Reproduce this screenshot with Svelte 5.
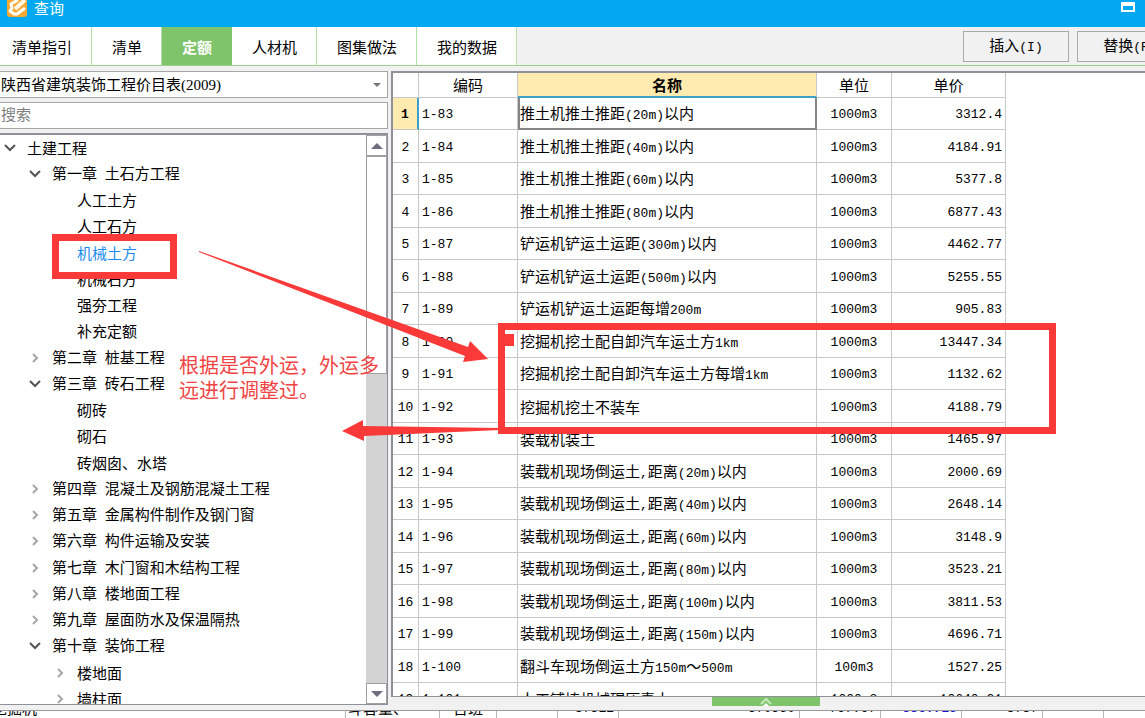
<script lang="ts">
    type Node = { label: string; level: number; state?: 'open' | 'closed' };
    type Row = { code: string; name: string; unit: string; price: string };

    const tabs = ['清单指引', '清单', '定额', '人材机', '图集做法', '我的数据'];
    let activeTab = $state('定额');
    let selectedNode = $state('机械土方');
    let selectedRow = $state(0);
    let keyword = $state('');

    const nodes: Node[] = [
        { label: '土建工程', level: 0, state: 'open' },
        { label: '第一章 土石方工程', level: 1, state: 'open' },
        { label: '人工土方', level: 2 },
        { label: '人工石方', level: 2 },
        { label: '机械土方', level: 2 },
        { label: '机械石方', level: 2 },
        { label: '强夯工程', level: 2 },
        { label: '补充定额', level: 2 },
        { label: '第二章 桩基工程', level: 1, state: 'closed' },
        { label: '第三章 砖石工程', level: 1, state: 'open' },
        { label: '砌砖', level: 2 },
        { label: '砌石', level: 2 },
        { label: '砖烟囱、水塔', level: 2 },
        { label: '第四章 混凝土及钢筋混凝土工程', level: 1, state: 'closed' },
        { label: '第五章 金属构件制作及钢门窗', level: 1, state: 'closed' },
        { label: '第六章 构件运输及安装', level: 1, state: 'closed' },
        { label: '第七章 木门窗和木结构工程', level: 1, state: 'closed' },
        { label: '第八章 楼地面工程', level: 1, state: 'closed' },
        { label: '第九章 屋面防水及保温隔热', level: 1, state: 'closed' },
        { label: '第十章 装饰工程', level: 1, state: 'open' },
        { label: '楼地面', level: 2, state: 'closed' },
        { label: '墙柱面', level: 2, state: 'closed' }
    ];

    const rows: Row[] = [
        { code: '1-83', name: '推土机推土推距(20m)以内', unit: '1000m3', price: '3312.4' },
        { code: '1-84', name: '推土机推土推距(40m)以内', unit: '1000m3', price: '4184.91' },
        { code: '1-85', name: '推土机推土推距(60m)以内', unit: '1000m3', price: '5377.8' },
        { code: '1-86', name: '推土机推土推距(80m)以内', unit: '1000m3', price: '6877.43' },
        { code: '1-87', name: '铲运机铲运土运距(300m)以内', unit: '1000m3', price: '4462.77' },
        { code: '1-88', name: '铲运机铲运土运距(500m)以内', unit: '1000m3', price: '5255.55' },
        { code: '1-89', name: '铲运机铲运土运距每增200m', unit: '1000m3', price: '905.83' },
        { code: '1-90', name: '挖掘机挖土配自卸汽车运土方1km', unit: '1000m3', price: '13447.34' },
        { code: '1-91', name: '挖掘机挖土配自卸汽车运土方每增1km', unit: '1000m3', price: '1132.62' },
        { code: '1-92', name: '挖掘机挖土不装车', unit: '1000m3', price: '4188.79' },
        { code: '1-93', name: '装载机装土', unit: '1000m3', price: '1465.97' },
        { code: '1-94', name: '装载机现场倒运土,距离(20m)以内', unit: '1000m3', price: '2000.69' },
        { code: '1-95', name: '装载机现场倒运土,距离(40m)以内', unit: '1000m3', price: '2648.14' },
        { code: '1-96', name: '装载机现场倒运土,距离(60m)以内', unit: '1000m3', price: '3148.9' },
        { code: '1-97', name: '装载机现场倒运土,距离(80m)以内', unit: '1000m3', price: '3523.21' },
        { code: '1-98', name: '装载机现场倒运土,距离(100m)以内', unit: '1000m3', price: '3811.53' },
        { code: '1-99', name: '装载机现场倒运土,距离(150m)以内', unit: '1000m3', price: '4696.71' },
        { code: '1-100', name: '翻斗车现场倒运土方150m～500m', unit: '100m3', price: '1527.25' },
        { code: '1-101', name: '人工铺填机械碾压素土', unit: '1000m3', price: '10640.21' }
    ];

    // latin runs are set in the mono face, half the width of a han character
    const split = (text: string) => text.match(/[\x20-\x7e]+|[^\x20-\x7e]+/g) ?? [];
    const isLatin = (part: string) => /^[\x20-\x7e]/.test(part);
</script>

{#snippet mixed(text: string)}
    {#each split(text) as part}{#if isLatin(part)}<span class="latin">{part}</span>{:else}{part}{/if}{/each}
{/snippet}

<div class="page">
    <div class="window">
        <header class="titlebar">
            <svg class="logo" width="20" height="17" viewBox="0 0 20 17">
                <rect x="0" y="-4" width="20" height="21" rx="3" fill="#f5a832" />
                <path
                    d="M11 0L4 4L5 8L3 11L7 14L10 14L18 8"
                    fill="none"
                    stroke="#fff"
                    stroke-width="3"
                    stroke-linejoin="round"
                />
                <path d="M8 9L18 0" stroke="#fff6e4" stroke-width="4" />
            </svg>
            <span>查询</span>
            <button class="maximize" aria-label="最大化">
                <svg width="14" height="10" viewBox="0 0 14 10">
                    <path d="M0 0H14V10H0Z M2 4V8H12V4Z" fill="#fff" fill-rule="evenodd" />
                </svg>
            </button>
        </header>

        <nav class="toolbar">
            {#each tabs as tab}
                <button class="tab" class:active={tab === activeTab} onclick={() => (activeTab = tab)}>{tab}</button>
            {/each}
            <div class="actions">
                <button class="action">{@render mixed('插入(I)')}</button>
                <button class="action">{@render mixed('替换(R)')}</button>
            </div>
        </nav>

        <main>
            <aside>
                <div class="library">
                    <select aria-label="定额库">
                        <option>陕西省建筑装饰工程价目表(2009)</option>
                    </select>
                    <svg width="8" height="4" viewBox="0 0 8 4"><path d="M0 0H8L4 4Z" fill="#777" /></svg>
                </div>
                <input class="search" type="text" placeholder="搜索" aria-label="搜索" bind:value={keyword} />

                <div class="tree">
                    <ul>
                        {#each nodes as node}
                            <li>
                                <button
                                    class="node level-{node.level}"
                                    class:selected={node.label === selectedNode}
                                    onclick={() => (selectedNode = node.label)}
                                >
                                    {#if node.state === 'open'}
                                        <svg width="12" height="12" viewBox="0 0 12 12">
                                            <path d="M1 2L6 7L11 2" fill="none" stroke="#555" stroke-width="2" />
                                        </svg>
                                    {:else if node.state === 'closed'}
                                        <svg width="12" height="12" viewBox="0 0 12 12">
                                            <path d="M4 1L8 5L4 9" fill="none" stroke="#a6a6a6" stroke-width="2" />
                                        </svg>
                                    {:else}
                                        <i></i>
                                    {/if}
                                    <span>{@render mixed(node.label)}</span>
                                </button>
                            </li>
                        {/each}
                    </ul>
                    <div class="scrollbar">
                        <button aria-label="向上"><svg width="12" height="6" viewBox="0 0 12 6"><path d="M0 6H12L6 0Z" fill="#6d6d80" /></svg></button>
                        <div class="thumb"></div>
                        <button class="down" aria-label="向下"><svg width="12" height="6" viewBox="0 0 12 6"><path d="M0 0H12L6 6Z" fill="#6d6d80" /></svg></button>
                    </div>
                </div>
            </aside>

            <section>
                <div class="grid">
                    <table>
                        <colgroup>
                            <col class="c-index" /><col class="c-code" /><col class="c-name" /><col class="c-unit" /><col class="c-price" />
                        </colgroup>
                        <thead>
                            <tr>
                                <th></th>
                                <th>编码</th>
                                <th class="current">名称</th>
                                <th>单位</th>
                                <th>单价</th>
                            </tr>
                        </thead>
                        <tbody>
                            {#each rows as row, i}
                                <tr class:selected={i === selectedRow} onclick={() => (selectedRow = i)}>
                                    <td class="index latin">{i + 1}</td>
                                    <td class="latin">{row.code}</td>
                                    <td class="name">{@render mixed(row.name)}</td>
                                    <td class="unit latin">{row.unit}</td>
                                    <td class="price latin">{row.price}</td>
                                </tr>
                            {/each}
                        </tbody>
                    </table>
                </div>
                <button class="expander" aria-label="展开">
                    <svg width="14" height="9" viewBox="0 0 14 9">
                        <path d="M2 7L7 2L12 7" fill="none" stroke="#c9e8be" stroke-width="2" />
                        <path d="M4 9L7 6L10 9Z" fill="#fff" />
                    </svg>
                </button>
            </section>
        </main>
    </div>

    <div class="behind">
        <span class="b-wide">挖掘机</span>
        <span class="b-spec">斗容量、</span>
        <span class="b-unit">台班</span>
        <span class="b-small"></span>
        <span class="b-small num">37312</span>
        <span class="b-total num">570550</span>
        <span class="b-value num">767.67</span>
        <span class="b-value num blue">336.725</span>
        <span class="b-value num">3737</span>
        <span class="b-small"></span>
    </div>

    <svg class="marks" width="1145" height="718" viewBox="0 0 1145 718" fill="#fa3939">
        <rect x="55.500" y="237.500" width="118" height="38" fill="none" stroke="#fa3939" stroke-width="7" />
        <rect x="501.500" y="326.500" width="551" height="104" fill="none" stroke="#fa3939" stroke-width="7" />
        <rect x="505" y="334" width="9" height="12" />
        <path d="M199 251L468 347L470 341L488 359L463 362L465 356L199 252Z" />
        <path d="M342 431L363 420V426L500 428V430L364 436V441Z" />
    </svg>
    <p class="note">根据是否外运，外运多远进行调整过。</p>
</div>

<style>
    :global(body) {
        margin: 0;
    }

    .page {
        position: relative;
        display: flex;
        flex-direction: column;
        height: 100vh;
        overflow: hidden;
        background: #fff;
        color: #000;
        font: 15px/20px 'Liberation Serif', 'Noto Sans CJK SC', sans-serif;
    }

    button,
    input,
    select {
        margin: 0;
        padding: 0;
        border: 0;
        border-radius: 0;
        background: none;
        color: inherit;
        font: inherit;
    }

    .latin {
        font-family: 'Liberation Mono', monospace;
        font-size: 13px;
        white-space: pre;
    }

    .window {
        flex: 1;
        min-height: 0;
        display: flex;
        flex-direction: column;
        background: #f1f1f1;
        border-bottom: 1px solid #999;
    }

    .titlebar {
        display: flex;
        align-items: flex-start;
        gap: 7px;
        height: 27px;
        padding-left: 7px;
        background: #02a9f1;
        color: #fff;
        line-height: 18px;
    }

    .maximize {
        margin: 2px 10px 0 auto;
        line-height: 0;
    }

    .toolbar {
        display: flex;
        height: 38px;
        border-bottom: 1px solid #9cd08c;
        overflow: hidden;
    }

    .tab {
        flex: none;
        padding: 4px 19px 0 20px;
        border-right: 1px solid #b4e0a8;
        background: #fff;
    }

    .tab:first-child {
        padding-left: 12px;
    }

    .tab.active {
        background: #7fc36a;
        border-color: #7fc36a;
        color: #fff;
        font-weight: bold;
    }

    .actions {
        display: flex;
        align-items: center;
        gap: 8px;
        margin-left: auto;
        margin-right: -38px;
    }

    .action {
        width: 106px;
        height: 31px;
        padding-top: 2px;
        border: 1px solid #a8a8a8;
    }

    main {
        flex: 1;
        min-height: 0;
        display: flex;
        gap: 3px;
        padding-top: 5px;
    }

    aside {
        flex: none;
        width: 388px;
        display: flex;
        flex-direction: column;
        gap: 4px;
        padding-bottom: 5px;
    }

    .library {
        position: relative;
    }

    .library svg {
        position: absolute;
        right: 7px;
        top: 12px;
        pointer-events: none;
    }

    .library select,
    .search {
        display: block;
        appearance: none;
        box-sizing: border-box;
        width: 100%;
        height: 27px;
        padding-left: 1px;
        border: 1px solid #a5a5a5;
        border-left: 0;
        background: #fff;
    }

    .search::placeholder {
        color: #808080;
        opacity: 1;
    }

    .tree {
        flex: 1;
        min-height: 0;
        display: flex;
        border: 1px solid #8e9199;
        border-top-width: 2px;
        border-left: 0;
        background: #fff;
    }

    .tree ul {
        flex: 1;
        margin: 0;
        padding: 0;
        overflow: hidden;
        list-style: none;
    }

    .tree li {
        height: 26px;
    }

    .tree li:nth-child(4n) {
        height: 27px;
    }

    .node {
        display: flex;
        align-items: center;
        gap: 11px;
        width: 100%;
        height: 26px;
        padding-top: 2px;
        text-align: left;
        white-space: nowrap;
    }

    .node svg,
    .node i {
        flex: none;
        width: 12px;
    }

    .level-0 {
        padding-left: 4px;
    }

    .level-1 {
        padding-left: 29px;
    }

    .level-2 {
        padding-left: 54px;
    }

    .node.selected {
        color: #1a8cf0;
    }

    .scrollbar {
        display: flex;
        flex-direction: column;
        width: 21px;
        background: #d3d3d3;
    }

    .scrollbar button {
        height: 21px;
        border: 1px solid #a0a0a0;
        background: #fff;
        line-height: 0;
    }

    .scrollbar .down {
        margin-top: auto;
    }

    .thumb {
        height: 38%;
        border: 1px solid #a0a0a0;
        background: #fff;
    }

    section {
        flex: 1;
        min-width: 0;
        display: flex;
        flex-direction: column;
        align-items: flex-start;
        padding-bottom: 4px;
    }

    .grid {
        flex: 1;
        min-height: 0;
        width: 100%;
        box-sizing: border-box;
        overflow: hidden;
        border: solid #8e9199;
        border-width: 2px 0 1px 2px;
        background: #fff;
    }

    table {
        table-layout: fixed;
        width: 613px;
        border-spacing: 0;
    }

    .c-index {
        width: 26px;
    }

    .c-code {
        width: 99px;
    }

    .c-name {
        width: 299px;
    }

    .c-unit {
        width: 75px;
    }

    .c-price {
        width: 114px;
    }

    th,
    td {
        box-sizing: border-box;
        padding: 2px 3px 0;
        border: solid #c8c8c8;
        border-width: 0 1px 1px 0;
        white-space: nowrap;
    }

    th {
        height: 25px;
        font-weight: normal;
    }

    th.current {
        border-bottom: 2px solid #3f9fc8;
        background: #ffebb0;
        font-weight: bold;
    }

    td {
        height: 32px;
        padding-top: 3px;
    }

    tr:nth-child(even) td {
        height: 33px;
    }

    .name {
        padding-left: 2px;
    }

    .index,
    .unit {
        text-align: center;
    }

    .index {
        padding-left: 0;
        padding-right: 0;
    }

    .price {
        text-align: right;
    }

    .selected .index {
        border-right: 2px solid #3f9fc8;
        background: #ffebb0;
        font-weight: bold;
    }

    .selected .name {
        border: 2px solid #858585;
        border-top: 0;
        padding: 4px 0 0;
    }

    .expander {
        width: 108px;
        height: 9px;
        margin-left: 321px;
        background: #7fc36a;
        line-height: 0;
    }

    /* strip of the sheet that shows under the dialog */
    .behind {
        flex: none;
        display: flex;
        align-items: flex-end;
        height: 7px;
        margin-left: -8px;
        overflow: hidden;
    }

    .behind span {
        flex: none;
        box-sizing: border-box;
        height: 18px;
        border-right: 1px solid #b5b5b5;
        line-height: 18px;
        white-space: nowrap;
    }

    .b-wide {
        width: 354px;
    }

    .b-spec {
        width: 94px;
        padding-left: 2px;
    }

    .b-unit {
        width: 57px;
        text-align: center;
    }

    .b-small {
        width: 61px;
    }

    .b-total {
        width: 181px;
    }

    .b-value {
        width: 81px;
    }

    .num {
        padding-right: 4px;
        font-family: 'Liberation Mono', monospace;
        font-size: 13px;
        text-align: right;
    }

    .blue {
        color: #1a12d8;
        font-weight: bold;
    }

    .marks {
        position: absolute;
        left: 0;
        top: 0;
        pointer-events: none;
    }

    .note {
        position: absolute;
        left: 179px;
        top: 354px;
        width: 204px;
        margin: 0;
        color: #f04444;
        font-size: 20px;
        line-height: 25px;
    }
</style>
